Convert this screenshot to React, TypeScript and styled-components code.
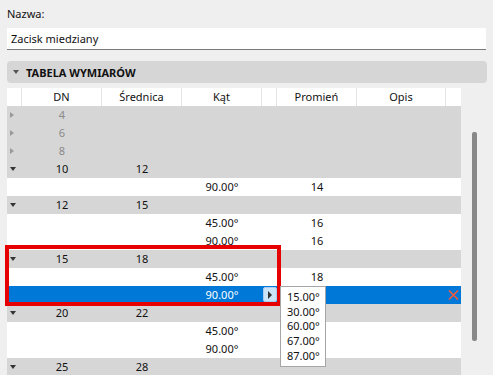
import styled, { createGlobalStyle } from "styled-components";

const GlobalStyle = createGlobalStyle`
  html, body {
    margin: 0;
    padding: 0;
    background: #efefef;
  }
  body {
    font-family: "Noto Sans", "Segoe UI", Arial, sans-serif;
    font-size: 11px;
    color: #111;
  }
`;

type GroupRow = { kind: "group"; dn: string; sr?: string; expanded: boolean };
type ItemRow = { kind: "item"; kat: string; prom?: string; selected?: boolean };
type Row = GroupRow | ItemRow;

const rows: Row[] = [
  { kind: "group", dn: "4", expanded: false },
  { kind: "group", dn: "6", expanded: false },
  { kind: "group", dn: "8", expanded: false },
  { kind: "group", dn: "10", sr: "12", expanded: true },
  { kind: "item", kat: "90.00°", prom: "14" },
  { kind: "group", dn: "12", sr: "15", expanded: true },
  { kind: "item", kat: "45.00°", prom: "16" },
  { kind: "item", kat: "90.00°", prom: "16" },
  { kind: "group", dn: "15", sr: "18", expanded: true },
  { kind: "item", kat: "45.00°", prom: "18" },
  { kind: "item", kat: "90.00°", selected: true },
  { kind: "group", dn: "20", sr: "22", expanded: true },
  { kind: "item", kat: "45.00°" },
  { kind: "item", kat: "90.00°" },
  { kind: "group", dn: "25", sr: "28", expanded: true },
];

const angleOptions = ["15.00°", "30.00°", "60.00°", "67.00°", "87.00°"];

const COLS = "15px 80px 80px 80px 15px 80px 89px 15px";

const Page = styled.div`
  position: relative;
  height: 375px;
  overflow: hidden;
  padding: 6px 6px 0 7px;
  box-sizing: border-box;
`;

const Label = styled.div`
  line-height: 16px;
  height: 16px;
  margin-bottom: 6px;
`;

const NameInput = styled.div`
  height: 22px;
  box-sizing: border-box;
  background: #fff;
  border-bottom: 1px solid #7a7a7a;
  padding-left: 4px;
  line-height: 21px;
  margin-right: 1px;
`;

const SectionHeader = styled.div`
  margin-top: 11px;
  height: 22px;
  background: #d6d6d6;
  border-radius: 4px;
  display: flex;
  align-items: center;
  gap: 7px;
  padding-left: 6px;
  font-weight: 700;
`;

const DownCaret = styled.span<{ $color?: string }>`
  width: 0;
  height: 0;
  border-left: 3.5px solid transparent;
  border-right: 3.5px solid transparent;
  border-top: 4px solid ${({ $color }) => $color ?? "#444"};
`;

const RightCaret = styled.span`
  width: 0;
  height: 0;
  border-top: 3px solid transparent;
  border-bottom: 3px solid transparent;
  border-left: 4px solid #9a9a9a;
`;

const TableArea = styled.div`
  margin-top: 5px;
  display: flex;
`;

const Table = styled.div`
  width: 454px;
  flex: none;
`;

const HeaderRow = styled.div`
  display: grid;
  grid-template-columns: ${COLS};
  height: 18px;
  background: #fff;
`;

const HeaderCell = styled.div`
  text-align: center;
  line-height: 18px;
  border-right: 1px solid #e4e4e4;
  &:last-child {
    border-right: none;
  }
`;

const BodyRow = styled.div<{ $variant: "group" | "item" | "selected" }>`
  display: grid;
  grid-template-columns: ${COLS};
  height: 18px;
  line-height: 18px;
  background: ${({ $variant }) =>
    $variant === "group" ? "#d6d6d6" : $variant === "selected" ? "#0078d7" : "#fff"};
  color: ${({ $variant }) => ($variant === "selected" ? "#fff" : "#111")};
`;

const Cell = styled.div<{ $muted?: boolean }>`
  text-align: center;
  color: ${({ $muted }) => ($muted ? "#8a8a8a" : "inherit")};
`;

const CaretCell = styled.div`
  display: flex;
  align-items: center;
  padding-left: 3px;
`;

const MiniButton = styled.div`
  margin: 1px 0 0 1px;
  width: 14px;
  height: 15px;
  box-sizing: border-box;
  background: #cce4f7;
  border: 1px solid #a8cdee;
  border-radius: 2px;
  display: flex;
  align-items: center;
  justify-content: center;
`;

const ButtonCaret = styled.span`
  width: 0;
  height: 0;
  border-top: 4px solid transparent;
  border-bottom: 4px solid transparent;
  border-left: 4px solid #333;
`;

const DeleteCell = styled.div`
  display: flex;
  align-items: center;
  justify-content: flex-start;
  padding-left: 2px;
`;

const ScrollTrack = styled.div`
  flex: 1;
  padding: 44px 0 0 11px;
`;

const ScrollThumb = styled.div`
  width: 5px;
  height: 209px;
  background: #888;
  border-radius: 2px;
`;

const Dropdown = styled.div`
  position: absolute;
  left: 280px;
  top: 286px;
  width: 46px;
  box-sizing: border-box;
  background: #fff;
  border: 1px solid #a6a6a6;
  padding: 3px 0 3px 6px;
`;

const DropdownItem = styled.div`
  height: 14.7px;
  line-height: 14.7px;
  color: #111;
`;

const Highlight = styled.div`
  position: absolute;
  left: 5px;
  top: 245px;
  width: 276px;
  height: 61px;
  box-sizing: border-box;
  border: 4px solid #e60000;
  pointer-events: none;
`;

const RemoveIcon = () => (
  <svg width="11" height="10" viewBox="0 0 11 10">
    <path d="M1 0.5 L10 9.5 M10 0.5 L1 9.5" stroke="#f05a3c" strokeWidth="1.6" />
  </svg>
);

export default function App() {
  return (
    <>
      <GlobalStyle />
      <Page>
        <Label>Nazwa:</Label>
        <NameInput>Zacisk miedziany</NameInput>
        <SectionHeader>
          <DownCaret $color="#555" />
          <span>TABELA WYMIARÓW</span>
        </SectionHeader>
        <TableArea>
          <Table>
            <HeaderRow>
              <HeaderCell />
              <HeaderCell>DN</HeaderCell>
              <HeaderCell>Średnica</HeaderCell>
              <HeaderCell>Kąt</HeaderCell>
              <HeaderCell />
              <HeaderCell>Promień</HeaderCell>
              <HeaderCell>Opis</HeaderCell>
              <HeaderCell />
            </HeaderRow>
            {rows.map((row, i) =>
              row.kind === "group" ? (
                <BodyRow key={i} $variant="group">
                  <CaretCell>{row.expanded ? <DownCaret $color="#333" /> : <RightCaret />}</CaretCell>
                  <Cell $muted={!row.expanded}>{row.dn}</Cell>
                  <Cell>{row.sr}</Cell>
                  <Cell />
                  <Cell />
                  <Cell />
                  <Cell />
                  <Cell />
                </BodyRow>
              ) : (
                <BodyRow key={i} $variant={row.selected ? "selected" : "item"}>
                  <Cell />
                  <Cell />
                  <Cell />
                  <Cell>{row.kat}</Cell>
                  {row.selected ? (
                    <MiniButton>
                      <ButtonCaret />
                    </MiniButton>
                  ) : (
                    <Cell />
                  )}
                  <Cell>{row.prom}</Cell>
                  <Cell />
                  {row.selected ? (
                    <DeleteCell>
                      <RemoveIcon />
                    </DeleteCell>
                  ) : (
                    <Cell />
                  )}
                </BodyRow>
              )
            )}
          </Table>
          <ScrollTrack>
            <ScrollThumb />
          </ScrollTrack>
        </TableArea>
        <Highlight />
        <Dropdown>
          {angleOptions.map((a) => (
            <DropdownItem key={a}>{a}</DropdownItem>
          ))}
        </Dropdown>
      </Page>
    </>
  );
}
